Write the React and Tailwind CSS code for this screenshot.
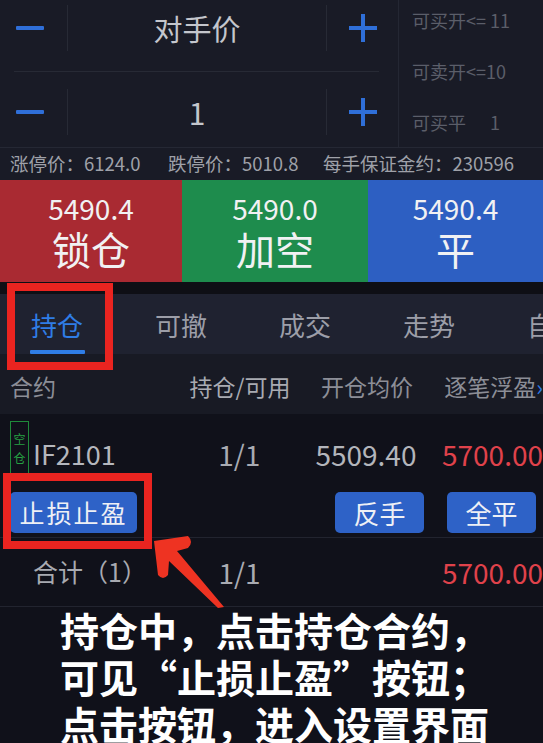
import React from "react";

const Minus = () => <div className="w-[28px] h-[4px] bg-[#2f6fd8] rounded-[1px]" />;
const Plus = () => (
  <div className="relative w-[28px] h-[28px]">
    <div className="absolute left-0 top-[12px] w-[28px] h-[4px] bg-[#2f6fd8]" />
    <div className="absolute top-0 left-[12px] w-[4px] h-[28px] bg-[#2f6fd8]" />
  </div>
);
const VDiv = () => <div className="w-px h-[46px] bg-[#272a35]" />;

function Stepper({ label, big }) {
  return (
    <div className="flex items-center h-full">
      <div className="w-[67px] flex items-center pl-[16px]">
        <Minus />
      </div>
      <VDiv />
      <div className={`flex-1 text-center text-[#c4c6cc] ${big ? "text-[30px]" : "text-[29px]"} leading-none`}>{label}</div>
      <VDiv />
      <div className="w-[71px] flex items-center justify-center">
        <Plus />
      </div>
    </div>
  );
}

export default function App() {
  return (
    <div className="relative w-[543px] h-[743px] overflow-hidden bg-[#10111a] font-['Noto_Sans_CJK_SC','Noto_Sans',sans-serif]">
      {/* top */}
      <div className="bg-[#191b26]">
        <div className="flex h-[147px]">
          <div className="w-[398px] flex flex-col">
            <div className="h-[56px]">
              <Stepper label="对手价" />
            </div>
            <div className="mt-[15px] ml-[14px] w-[365px] h-px bg-[#272a35]" />
            <div className="h-[75px] pt-[5px]">
              <Stepper label="1" big />
            </div>
          </div>
          <div className="flex-1 border-l border-[#242733] pl-[13px] pt-[8px] flex flex-col gap-[27px] text-[18px] text-[#5b5e69]">
            <div className="h-[24px] leading-[24px] whitespace-nowrap">可买开&lt;= 11</div>
            <div className="h-[24px] leading-[24px] whitespace-nowrap">可卖开&lt;=10</div>
            <div className="h-[24px] leading-[24px] whitespace-nowrap">可买平<span className="ml-[24px]">1</span></div>
          </div>
        </div>
        <div className="h-px bg-[#252834]" />
        <div className="h-[32px] flex items-center pl-[10px] text-[18.5px] text-[#9fa1a9] whitespace-nowrap">
          <span className="w-[158px]">涨停价：6124.0</span>
          <span className="w-[155px]">跌停价：5010.8</span>
          <span>每手保证金约：230596</span>
        </div>
      </div>

      {/* price buttons */}
      <div className="flex h-[102px] text-[#f1f1f3]">
        <div className="w-[182px] bg-[#a92a32] flex flex-col items-center justify-center">
          <div className="text-[28px] leading-[34px]">5490.4</div>
          <div className="text-[39px] leading-[46px]">锁仓</div>
        </div>
        <div className="w-[186px] bg-[#1e8c4d] flex flex-col items-center justify-center">
          <div className="text-[28px] leading-[34px]">5490.0</div>
          <div className="text-[39px] leading-[46px]">加空</div>
        </div>
        <div className="flex-1 bg-[#2d5fc2] flex flex-col items-center justify-center">
          <div className="text-[28px] leading-[34px]">5490.4</div>
          <div className="text-[39px] leading-[46px]">平</div>
        </div>
      </div>

      <div className="h-[12px] bg-[#0e0f15]" />

      {/* tabs */}
      <div className="h-[60px] bg-[#1f2230] flex items-center pl-[31px] gap-[72px] whitespace-nowrap text-[26px] text-[#9c9ea8]">
        <div className="relative h-full flex items-center text-[#2f7de6]">
          持仓
          <div className="absolute bottom-0 -left-[1px] w-[55px] h-[4px] bg-[#2f7de6] rounded-[1px]" />
        </div>
        <div>可撤</div>
        <div>成交</div>
        <div>走势</div>
        <div>自选</div>
      </div>

      {/* header */}
      <div className="h-[60px] pt-[5px] bg-[#181a24] flex items-center text-[23px] text-[#8c8e97] whitespace-nowrap">
        <div className="w-[181px] pl-[10px]">合约</div>
        <div className="w-[120px] text-center text-[#a9abb2]">持仓/可用</div>
        <div className="w-[135px] text-center">开仓均价</div>
        <div className="flex-1 pl-[10px] flex items-center">逐笔浮盈<span className="text-[#2f7de6] text-[22px]">›</span></div>
      </div>

      {/* position row */}
      <div className="bg-[#10111a]">
        <div className="h-[73px] flex items-center whitespace-nowrap text-[28px]">
          <div className="w-[181px] pl-[10px] flex items-center">
            <div className="-mt-[6px] w-[19px] h-[53px] border border-[#1f8a3a] flex flex-col items-center justify-center text-[12px] leading-[19px] text-[#26a043]">
              <span>空</span>
              <span>仓</span>
            </div>
            <span className="ml-[4px] mt-[7px] text-[27px] text-[#b5b7bd]">IF2101</span>
          </div>
          <div className="w-[120px] text-center mt-[7px] text-[#a9abb2]">1/1</div>
          <div className="w-[135px] text-center mt-[7px] text-[#b3b5bb]">5509.40</div>
          <div className="flex-1 pl-[9px] mt-[7px] text-[#e0424b]">5700.00</div>
        </div>
        <div className="mt-[5px] h-[41px] flex items-center pl-[10px] pr-[7px]">
          <button className="w-[127px] h-[41px] rounded-[5px] bg-[#2e62c7] text-[25px] tracking-[2px] text-[#eef0f5] flex items-center justify-center">止损止盈</button>
          <div className="flex-1" />
          <button className="w-[89px] h-[41px] rounded-[5px] bg-[#2e62c7] text-[26px] text-[#eef0f5] flex items-center justify-center">反手</button>
          <button className="ml-[23px] w-[89px] h-[41px] rounded-[5px] bg-[#2e62c7] text-[26px] text-[#eef0f5] flex items-center justify-center">全平</button>
        </div>
        <div className="mt-[4px] h-px bg-[#22242f]" />
        <div className="h-[68px] flex items-center whitespace-nowrap text-[28px]">
          <div className="w-[181px] pl-[33px] text-[25px] text-[#a8aab1]">合计（1）</div>
          <div className="w-[120px] text-center text-[#a9abb2]">1/1</div>
          <div className="w-[135px]" />
          <div className="flex-1 pl-[9px] text-[#e0424b]">5700.00</div>
        </div>
        <div className="h-px bg-[#22242f]" />
        <div className="-mt-[1px] pl-[60px] text-[39px] leading-[47px] font-bold text-white whitespace-nowrap">
          <div>持仓中，点击持仓合约，</div>
          <div>可见“止损止盈”按钮；</div>
          <div>点击按钮，进入设置界面</div>
        </div>
      </div>

      {/* annotations */}
      <div className="absolute left-[7px] top-[283px] w-[106px] h-[87px] border-[8px] border-[#ea2420]" />
      <div className="absolute left-[3px] top-[473px] w-[149px] h-[76px] border-[8px] border-[#ea2420]" />
      <svg className="absolute left-0 top-0" width="543" height="743" viewBox="0 0 543 743">
        <path d="M154 541 L188 536 Q194 542 188 548 L177 551 L224 607 L218 608 L169 561 L168 575 Q163 581 158 575 Z" fill="#ee3322" />
      </svg>
    </div>
  );
}
